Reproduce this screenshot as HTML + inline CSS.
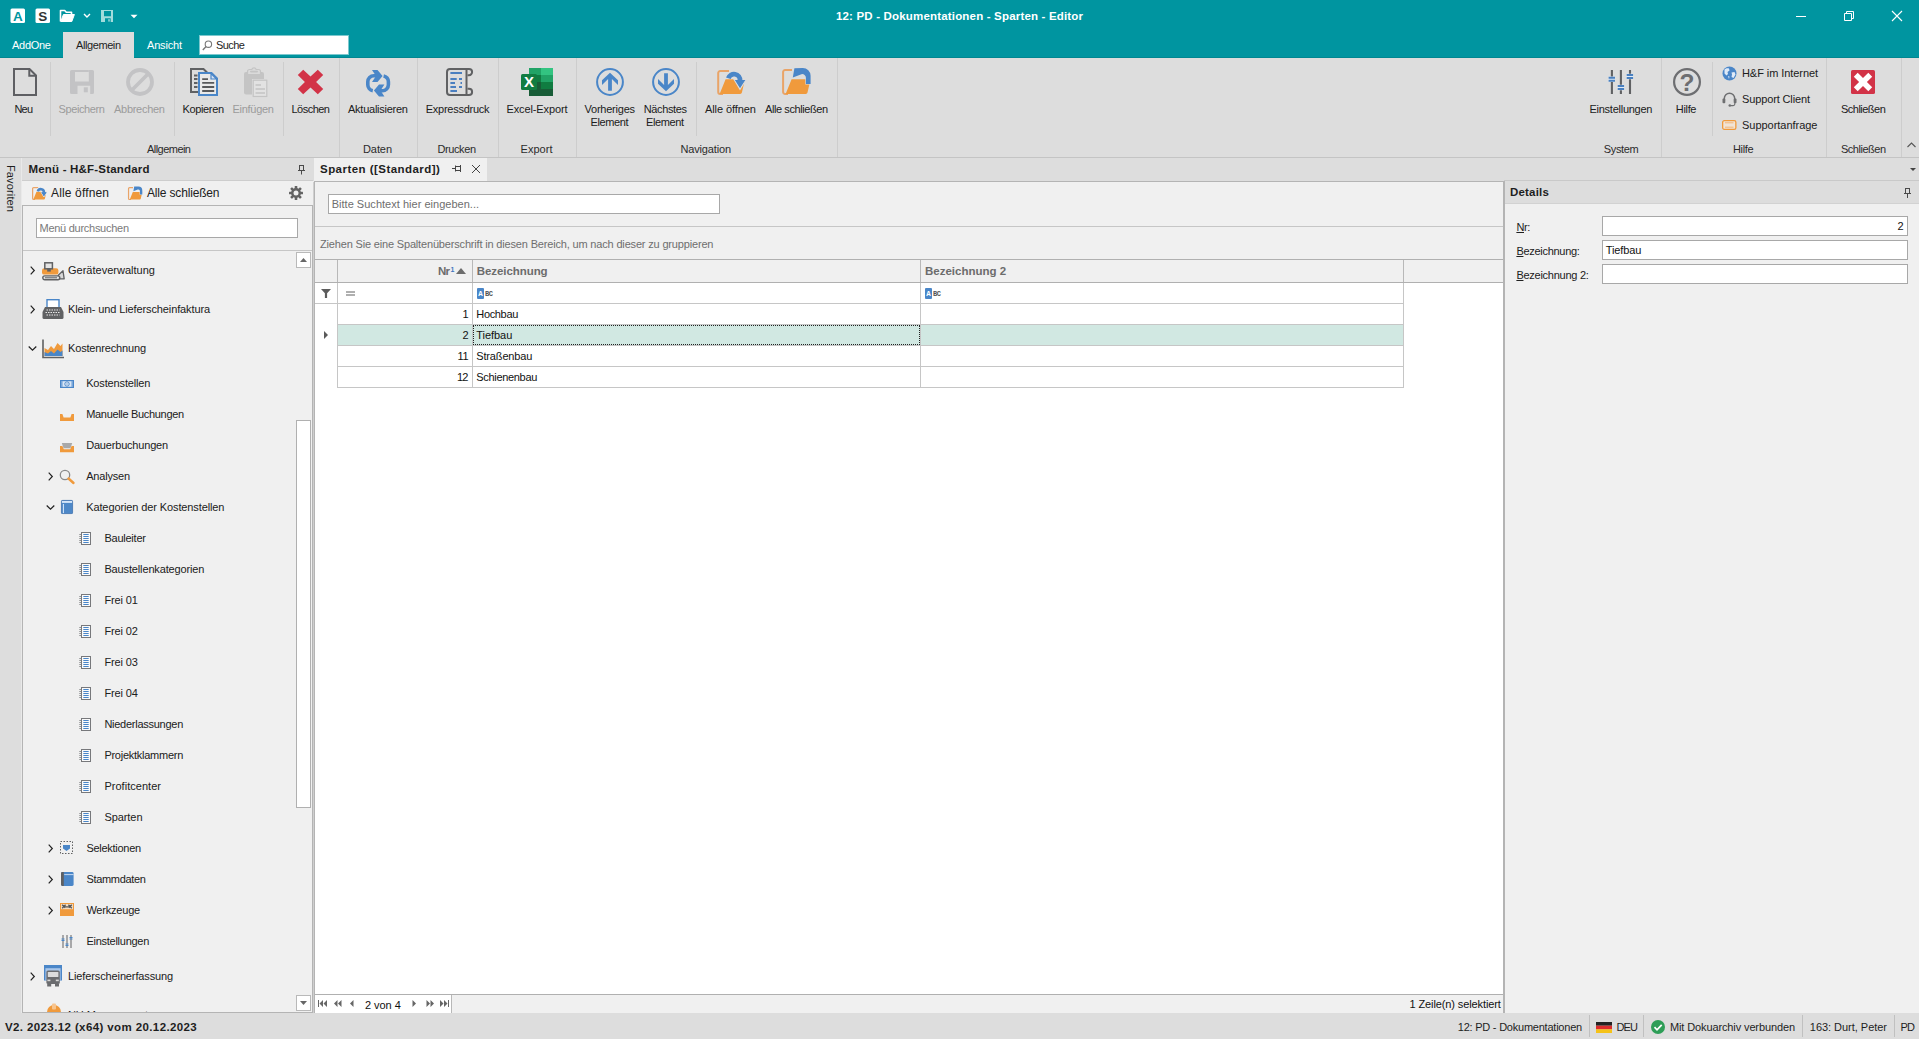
<!DOCTYPE html>
<html lang="de">
<head>
<meta charset="utf-8">
<title>12: PD - Dokumentationen - Sparten - Editor</title>
<style>
html,body{margin:0;padding:0;}
body{width:1919px;height:1039px;overflow:hidden;position:relative;background:#f0f0f0;
 font-family:"Liberation Sans","DejaVu Sans",sans-serif;font-size:11px;color:#202020;}
.a{position:absolute;white-space:nowrap;}
.t{position:absolute;white-space:nowrap;line-height:13px;height:13px;}
.dis{color:#9b9b9b;}
u{text-decoration:underline;text-underline-offset:1px;}
svg{position:absolute;overflow:visible;}
</style>
</head>
<body>
<div class="a" style="left:0px;top:0px;width:1919px;height:58px;background:#0095a0;"></div>
<div class="a" style="left:0px;top:58px;width:1919px;height:100px;background:#dddddd;"></div>
<div class="a" style="left:0px;top:57px;width:1919px;height:1px;background:#008791;"></div>
<div class="a" style="left:63px;top:32px;width:71px;height:26px;background:#dddddd;"></div>
<svg style="left:10px;top:8px" width="16" height="16" viewBox="0 0 16 16"><rect x="0.5" y="0.5" width="14.5" height="14.5" rx="1.5" fill="#fff"/><text x="7.8" y="12.6" font-family="Liberation Sans,sans-serif" font-weight="bold" font-size="13.5" text-anchor="middle" fill="#0095a0">A</text></svg>
<svg style="left:35px;top:8px" width="16" height="16" viewBox="0 0 16 16"><rect x="0.5" y="0.5" width="14.5" height="14.5" rx="1.5" fill="#fff"/><text x="7.8" y="12.6" font-family="Liberation Sans,sans-serif" font-weight="bold" font-size="13.5" text-anchor="middle" fill="#333">S</text></svg>
<svg style="left:59px;top:9px" width="17" height="14" viewBox="0 0 17 14"><path d="M1.5 12.5V1.5h4.2l1.6 1.8h5.2v2.2" fill="none" stroke="#fff" stroke-width="1.6" stroke-linejoin="round"/><path d="M1.8 12.5l2.6-7h11l-2.6 7z" fill="#fff" stroke="#fff" stroke-width="1" stroke-linejoin="round"/></svg>
<svg style="left:83px;top:13px" width="8" height="6" viewBox="0 0 8 6"><path d="M1 1l3 3 3-3" fill="none" stroke="#fff" stroke-width="1.4"/></svg>
<svg style="left:101px;top:10px" width="12" height="12" viewBox="0 0 12 12"><path d="M0 0h12v12H0z M3 1v5.200h7V1z M4 12V8.300h5.700V12z" fill="#a3dcdc" fill-rule="evenodd"/><rect x="7.300" y="9.200" width="1.400" height="2.400" fill="#a3dcdc"/></svg>
<svg style="left:130px;top:14px" width="8" height="5" viewBox="0 0 8 5"><path d="M0.5 0.8h7L4 4.3z" fill="#fff"/></svg>
<div class="t" style="left:835.9px;top:10px;font-weight:bold;font-size:11.5px;color:#fff;letter-spacing:0.18px;">12: PD - Dokumentationen - Sparten - Editor</div>
<svg style="left:1796px;top:16px" width="10" height="1"><rect width="10" height="1" fill="#fff"/></svg>
<svg style="left:1844px;top:11px" width="10" height="10" viewBox="0 0 10 10"><path d="M0.500 2.500h7v7h-7z M2.500 2.500v-2h7v7h-2" fill="none" stroke="#fff" stroke-width="1"/></svg>
<svg style="left:1892px;top:11px" width="10" height="10" viewBox="0 0 10 10"><path d="M0 0l10 10M10 0l-10 10" fill="none" stroke="#fff" stroke-width="1.100"/></svg>
<div class="t" style="left:12px;top:39px;color:#fff;letter-spacing:-0.28px;">AddOne</div>
<div class="t" style="left:76px;top:39px;color:#1e1e1e;letter-spacing:-0.41px;">Allgemein</div>
<div class="t" style="left:147px;top:39px;color:#fff;letter-spacing:-0.18px;">Ansicht</div>
<div class="a" style="left:199px;top:35px;width:150px;height:20px;background:#fff;border:1px solid #7cc8ce;box-sizing:border-box;"></div>
<svg style="left:202px;top:40px" width="11" height="11" viewBox="0 0 11 11"><circle cx="6.4" cy="4.2" r="3.2" fill="none" stroke="#777" stroke-width="1.1"/><path d="M4.1 6.6L0.8 9.9" stroke="#777" stroke-width="1.4"/></svg>
<div class="t" style="left:216px;top:39px;color:#1e1e1e;letter-spacing:-0.55px;">Suche</div>
<div class="a" style="left:50px;top:62px;width:1px;height:74px;background:#cdcdcd;"></div>
<div class="a" style="left:174px;top:62px;width:1px;height:74px;background:#cdcdcd;"></div>
<div class="a" style="left:283px;top:62px;width:1px;height:74px;background:#cdcdcd;"></div>
<div class="a" style="left:696px;top:62px;width:1px;height:74px;background:#cdcdcd;"></div>
<div class="a" style="left:1712px;top:62px;width:1px;height:74px;background:#cdcdcd;"></div>
<div class="a" style="left:339px;top:58px;width:1px;height:99px;background:#cdcdcd;"></div>
<div class="a" style="left:417px;top:58px;width:1px;height:99px;background:#cdcdcd;"></div>
<div class="a" style="left:498px;top:58px;width:1px;height:99px;background:#cdcdcd;"></div>
<div class="a" style="left:576px;top:58px;width:1px;height:99px;background:#cdcdcd;"></div>
<div class="a" style="left:837px;top:58px;width:1px;height:99px;background:#cdcdcd;"></div>
<div class="a" style="left:1661px;top:58px;width:1px;height:99px;background:#cdcdcd;"></div>
<div class="a" style="left:1826px;top:58px;width:1px;height:99px;background:#cdcdcd;"></div>
<div class="a" style="left:1901px;top:58px;width:1px;height:99px;background:#cdcdcd;"></div>
<div class="a" style="left:0px;top:157px;width:1919px;height:1px;background:#c4c4c4;"></div>
<svg style="left:13px;top:68px" width="24" height="28" viewBox="0 0 24 28"><path d="M1 1h15.500l6.500 6.500V27H1z" fill="none" stroke="#5e5f63" stroke-width="2" stroke-linejoin="miter"/><path d="M16.300 1.500v6.200H22.500" fill="none" stroke="#5e5f63" stroke-width="2"/></svg>
<div class="t" style="left:14.5px;top:103px;letter-spacing:-0.84px;">Neu</div>
<svg style="left:70px;top:70px" width="24" height="24" viewBox="0 0 24 24"><path d="M1.500 0h21a1.500 1.500 0 0 1 1.500 1.500v21a1.500 1.500 0 0 1 -1.500 1.500h-21a1.500 1.500 0 0 1 -1.500 -1.500v-21a1.500 1.500 0 0 1 1.500 -1.500z M5 0v11.500h13.800v-11.500z M7.500 15.700v8.300h12.700v-8.300z" fill="#c3c3c5" fill-rule="evenodd"/><rect x="5" y="0" width="13.800" height="2" fill="#c3c3c5"/><rect x="13.800" y="17.300" width="4" height="5" fill="#c3c3c5"/></svg>
<div class="t dis" style="left:58.5px;top:103px;letter-spacing:-0.38px;">Speichern</div>
<svg style="left:126px;top:68px" width="28" height="28" viewBox="0 0 28 28"><circle cx="14" cy="14" r="12" fill="none" stroke="#c3c3c5" stroke-width="3.800"/><path d="M5.500 22.500L22.500 5.500" stroke="#c3c3c5" stroke-width="3.800"/></svg>
<div class="t dis" style="left:114px;top:103px;letter-spacing:-0.28px;">Abbrechen</div>
<svg style="left:190px;top:68px" width="28" height="28" viewBox="0 0 28 28"><path d="M1 1h12.500l3.500 3.500v19.500H1z" fill="none" stroke="#606163" stroke-width="2"/><path d="M4 7.500h3.500M4 11h3.500M4 15h3.500M4 19h3.500" stroke="#606163" stroke-width="1.800"/><path d="M9 5h12.500l5.500 5.500V27H9z" fill="#e9e9e9" stroke="#4a86c8" stroke-width="2"/><path d="M21 5.500v5.500h5.500z" fill="#d5e2f4" stroke="#4a86c8" stroke-width="1.200"/><path d="M12.200 11.100h5.800M12.200 14.900h12M12.200 19h12M12.200 23h12" stroke="#58595b" stroke-width="1.900"/></svg>
<div class="t" style="left:182.5px;top:103px;letter-spacing:-0.36px;">Kopieren</div>
<svg style="left:244px;top:66px" width="24" height="31" viewBox="0 0 24 31"><rect x="0" y="6" width="20" height="22.500" rx="2" fill="#c4c4c4"/><path d="M3.500 8.500V5.500a2 2 0 0 1 2 -2h2.300a2.300 2.300 0 0 1 4.400 0h2.300a2 2 0 0 1 2 2V8.500z" fill="#dadada" stroke="#c4c4c4" stroke-width="1.200"/><rect x="6" y="4.800" width="8" height="1.600" rx="0.800" fill="#c4c4c4"/><rect x="9.200" y="14.200" width="13.600" height="16.300" fill="#e2e2e2" stroke="#dedede" stroke-width="2.400"/><rect x="9.200" y="14.200" width="13.600" height="16.300" fill="#e2e2e2" stroke="#c4c4c4" stroke-width="1.200"/><path d="M11.500 19h5.500M11.500 23h9.500M11.500 27h9.500" stroke="#c4c4c4" stroke-width="1.700"/></svg>
<div class="t dis" style="left:232.5px;top:103px;letter-spacing:-0.28px;">Einfügen</div>
<svg style="left:298px;top:70px" width="25" height="24" viewBox="0 0 25 24"><path d="M5.200 -0.300L12.500 6.600L19.800 -0.300L25.200 5.100L18.100 12L25.200 18.900L19.800 24.300L12.500 17.400L5.200 24.300L-0.200 18.900L6.900 12L-0.200 5.100z" fill="#d23347"/></svg>
<div class="t" style="left:291.5px;top:103px;letter-spacing:-0.52px;">Löschen</div>
<svg style="left:366px;top:70px" width="24" height="26" viewBox="0 0 24 26"><path d="M10 5.800H7.800A6 6 0 0 0 1.800 11.800V14.800A6 6 0 0 0 6.800 20.700" fill="none" stroke="#4a86c8" stroke-width="3.600"/><path d="M14 20.800H16.400A6 6 0 0 0 22.400 14.800V11.800A6 6 0 0 0 17.600 5.900" fill="none" stroke="#4a86c8" stroke-width="3.600"/><path d="M6 0H11.500L16.600 6L11.500 12H6L10 6z" fill="#4a86c8"/><path d="M18.400 14.600H13L7.900 20.600L13 26.400H18.400L14.500 20.600z" fill="#4a86c8"/></svg>
<div class="t" style="left:348px;top:103px;letter-spacing:-0.25px;">Aktualisieren</div>
<svg style="left:446px;top:68px" width="27" height="28" viewBox="0 0 27 28"><path d="M21.500 7.200H23A3 3 0 1 0 23 1H4A3 3 0 0 0 1 4V24A3 3 0 0 0 4 27H23A3 3 0 1 0 23 20.800H21.500" fill="none" stroke="#606163" stroke-width="2"/><path d="M20.500 1.500V26.500" stroke="#606163" stroke-width="2"/><path d="M4.400 5h11.600M4.400 11h6.300M13 11h3M4.400 15h4.600M14.500 15h1.500M4.400 19h5.600M13 19h3M4.400 23h6.600" stroke="#4a7fc0" stroke-width="1.800"/></svg>
<div class="t" style="left:425.8px;top:103px;letter-spacing:-0.27px;">Expressdruck</div>
<svg style="left:521px;top:68px" width="32" height="28" viewBox="0 0 32 28"><rect x="8" y="0" width="24" height="28" rx="1.500" fill="#21a366"/><rect x="20" y="0" width="12" height="7" fill="#33c481"/><rect x="8" y="0" width="12" height="7" fill="#21a366"/><rect x="8" y="7" width="12" height="7" fill="#107c41"/><rect x="20" y="7" width="12" height="7" fill="#21a366"/><rect x="8" y="14" width="12" height="7" fill="#185c37"/><rect x="20" y="14" width="12" height="7" fill="#107c41"/><rect x="8" y="21" width="24" height="7" fill="#185c37"/><rect x="0" y="6" width="16" height="16" rx="1.500" fill="#107c41"/><text x="8" y="19.400" font-family="Liberation Sans,sans-serif" font-weight="bold" font-size="15" text-anchor="middle" fill="#fff">X</text></svg>
<div class="t" style="left:506.5px;top:103px;letter-spacing:-0.12px;">Excel-Export</div>
<svg style="left:596px;top:68px" width="28" height="28" viewBox="0 0 28 28"><circle cx="14" cy="14" r="12.900" fill="none" stroke="#4a86c8" stroke-width="2"/><path d="M14 4.700L22 12.200V16.900L15.900 11.100V22.800H12.100V11.100L6 16.900V12.200z" fill="#4a86c8"/></svg>
<div class="t" style="left:584.5px;top:103px;letter-spacing:-0.23px;">Vorheriges</div>
<div class="t" style="left:590.5px;top:116px;letter-spacing:-0.39px;">Element</div>
<svg style="left:652px;top:68px" width="28" height="28" viewBox="0 0 28 28"><circle cx="14" cy="14" r="12.900" fill="none" stroke="#4a86c8" stroke-width="2"/><path d="M14 23.300L22 15.800V11.100L15.900 16.900V5.200H12.100V16.900L6 11.100V15.800z" fill="#4a86c8"/></svg>
<div class="t" style="left:643.8px;top:103px;letter-spacing:-0.38px;">Nächstes</div>
<div class="t" style="left:646px;top:116px;letter-spacing:-0.39px;">Element</div>
<svg style="left:717px;top:68px" width="29" height="28" viewBox="0 0 29 28"><path d="M12 3H3.200A2 2 0 0 0 1.200 5V24A2 2 0 0 0 3.200 26H6" fill="none" stroke="#e9a468" stroke-width="2"/><path d="M8.600 11.200H28L24.900 24.600A1.800 1.800 0 0 1 23.100 26H2.600z" fill="#f09a3c"/><path d="M11.300 10.300A6 6 0 0 1 23 12.500" fill="none" stroke="#dddddd" stroke-width="6.600"/><path d="M17.200 11.400h11.800l-6 9.800z" fill="#4a86c8" stroke="#dddddd" stroke-width="1.400"/><path d="M11.300 10.300A6 6 0 0 1 23 12.500" fill="none" stroke="#4a86c8" stroke-width="4.800"/><path d="M17.900 12.100h10.400l-5.300 7.900z" fill="#4a86c8"/></svg>
<div class="t" style="left:705px;top:103px;letter-spacing:-0.08px;">Alle öffnen</div>
<svg style="left:782px;top:67px" width="30" height="29" viewBox="0 0 30 29"><path d="M10 3.100H3.100A2 2 0 0 0 1.100 5.100V25A2 2 0 0 0 3.100 27H6" fill="none" stroke="#e9a468" stroke-width="2"/><path d="M9.600 12.200H28.600L25.500 25.600A1.800 1.800 0 0 1 23.700 27H3.600z" fill="#f09a3c"/><path d="M28.600 17V8.800A7.800 7.800 0 0 0 20.800 1L12.400 1.200L10.800 10.600L19.500 7.200A3.600 3.600 0 0 1 23.900 10.800V17z" fill="#4a86c8" stroke="#dddddd" stroke-width="1.200" paint-order="stroke"/></svg>
<div class="t" style="left:765px;top:103px;letter-spacing:-0.42px;">Alle schließen</div>
<svg style="left:1609px;top:70px" width="25" height="24" viewBox="0 0 25 24"><path d="M2.900 0v24M11.900 0v24M21 0v24" stroke="#606163" stroke-width="2.100"/><rect x="-0.600" y="6.500" width="6.800" height="5.500" rx="1" fill="#dfeaf6"/><rect x="8.500" y="14.700" width="6.800" height="5.500" rx="1" fill="#dfeaf6"/><rect x="17.500" y="3.700" width="6.800" height="5.500" rx="1" fill="#dfeaf6"/><path d="M-0.400 7.800h6.400M-0.400 10.700h6.400M8.700 16h6.400M8.700 18.900h6.400M17.700 5h6.400M17.700 7.900h6.400" stroke="#4a80c0" stroke-width="2"/></svg>
<div class="t" style="left:1589.5px;top:103px;letter-spacing:-0.26px;">Einstellungen</div>
<svg style="left:1673px;top:68px" width="28" height="28" viewBox="0 0 28 28"><circle cx="14" cy="14" r="12.900" fill="none" stroke="#6d6e71" stroke-width="2.200"/><text x="14" y="23" font-family="Liberation Sans,sans-serif" font-weight="bold" font-size="24.500" text-anchor="middle" fill="#6d6e71">?</text></svg>
<div class="t" style="left:1675.8px;top:103px;letter-spacing:-0.33px;">Hilfe</div>
<svg style="left:1722px;top:66px" width="15" height="15" viewBox="0 0 15 15"><circle cx="7.500" cy="7.500" r="7" fill="#4a86c8"/><path d="M2.500 3.500c1.500-1.500 3.500-1.500 4.500-1l0.500 2-2 1.500 0.500 2-1.500 1.500-2-2z M9.500 6.500l3-0.500 1 2.500-2 3.500-2-1 0.500-2.500z M6 10l1.500 0.500-0.500 2.500z" fill="#dfeaf8"/></svg>
<div class="t" style="left:1742px;top:67px;letter-spacing:-0.07px;">H&amp;F im Internet</div>
<svg style="left:1722px;top:92px" width="15" height="15" viewBox="0 0 15 15"><path d="M2.300 9V6.500a5.200 5.200 0 0 1 10.400 0V9" fill="none" stroke="#6e6f71" stroke-width="1.500"/><rect x="0.500" y="6.500" width="2.800" height="4.800" rx="1" fill="#6e6f71"/><rect x="11.700" y="6.500" width="2.800" height="4.800" rx="1" fill="#6e6f71"/><path d="M12.800 11v0.800a1.800 1.800 0 0 1 -1.800 1.800H8.500" fill="none" stroke="#6e6f71" stroke-width="1.100"/><circle cx="7.800" cy="13.500" r="1.300" fill="#6e6f71"/></svg>
<div class="t" style="left:1742px;top:93px;letter-spacing:-0.13px;">Support Client</div>
<svg style="left:1722px;top:120px" width="15" height="11" viewBox="0 0 15 11"><rect x="0.650" y="0.650" width="13.200" height="8.700" rx="1.600" fill="#f1e4d6" stroke="#f09a3c" stroke-width="1.300"/><path d="M3 2.800h8.500M3 7.200h8.500" stroke="#f2b478" stroke-width="1"/></svg>
<div class="t" style="left:1742px;top:119px;letter-spacing:-0.03px;">Supportanfrage</div>
<svg style="left:1851px;top:70px" width="24" height="24" viewBox="0 0 24 24"><rect x="0" y="0" width="24" height="24" rx="1.600" fill="#d23347"/><path d="M6.700 2.800L12 8.100L17.300 2.800L21.200 6.700L15.900 12L21.200 17.300L17.300 21.200L12 15.900L6.700 21.200L2.800 17.300L8.100 12L2.800 6.700z" fill="#fff"/></svg>
<div class="t" style="left:1841px;top:103px;letter-spacing:-0.52px;">Schließen</div>
<svg style="left:1907px;top:142px" width="9" height="6" viewBox="0 0 9 6"><path d="M0.500 5l4-4 4 4" fill="none" stroke="#555" stroke-width="1.100"/></svg>
<div class="t" style="left:147px;top:143px;color:#2b2b2b;letter-spacing:-0.54px;">Allgemein</div>
<div class="t" style="left:363px;top:143px;color:#2b2b2b;letter-spacing:-0.09px;">Daten</div>
<div class="t" style="left:437.5px;top:143px;color:#2b2b2b;letter-spacing:-0.41px;">Drucken</div>
<div class="t" style="left:520.5px;top:143px;color:#2b2b2b;letter-spacing:0.04px;">Export</div>
<div class="t" style="left:680.5px;top:143px;color:#2b2b2b;letter-spacing:-0.16px;">Navigation</div>
<div class="t" style="left:1603.8px;top:143px;color:#2b2b2b;letter-spacing:-0.34px;">System</div>
<div class="t" style="left:1733px;top:143px;color:#2b2b2b;letter-spacing:-0.33px;">Hilfe</div>
<div class="t" style="left:1841px;top:143px;color:#2b2b2b;letter-spacing:-0.49px;">Schließen</div>
<div class="a" style="left:0px;top:158px;width:21px;height:856px;background:#dddddd;"></div>
<div class="a" style="left:21px;top:158px;width:1px;height:856px;background:#e9e9e9;"></div>
<div class="t" style="left:4px;top:165px;transform-origin:0 0;transform:translate(13px,0) rotate(90deg);letter-spacing:0.140px;color:#1e1e1e">Favoriten</div>
<div class="a" style="left:22px;top:158px;width:291px;height:23px;background:#dddddd;"></div>
<div class="a" style="left:22px;top:180px;width:291px;height:1px;background:#cdcdcd;"></div>
<div class="t" style="left:28.5px;top:163px;font-weight:bold;font-size:11.5px;color:#1e1e1e;letter-spacing:0.19px;">Menü - H&amp;F-Standard</div>
<svg style="left:298px;top:165px" width="7" height="10" viewBox="0 0 7 10"><path d="M1 0.500h5M1.500 0v5M5.500 0v5M0 5.500h7M3.500 6v3.500" fill="none" stroke="#4a4a4a" stroke-width="1"/></svg>
<div class="a" style="left:22px;top:181px;width:291px;height:25px;background:#f0f0f0;"></div>
<svg style="left:32px;top:186px" width="15" height="14.500" viewBox="0 0 29 28"><path d="M12 3H3.200A2 2 0 0 0 1.200 5V24A2 2 0 0 0 3.200 26H6" fill="none" stroke="#e9a468" stroke-width="2.400"/><path d="M8.600 11.200H28L24.900 24.600A1.800 1.800 0 0 1 23.100 26H2.600z" fill="#f09a3c"/><path d="M11.300 10.300A6 6 0 0 1 23 12.500" fill="none" stroke="#f0f0f0" stroke-width="7"/><path d="M17.200 11.400h11.800l-6 9.800z" fill="#4a86c8" stroke="#f0f0f0" stroke-width="1.600"/><path d="M11.300 10.300A6 6 0 0 1 23 12.500" fill="none" stroke="#4a86c8" stroke-width="5"/><path d="M17.900 12.100h10.400l-5.300 7.900z" fill="#4a86c8"/></svg>
<div class="t" style="left:51px;top:186px;font-size:12px;line-height:14px;height:14px;letter-spacing:0.15px;">Alle öffnen</div>
<svg style="left:128px;top:185.500px" width="15" height="14.500" viewBox="0 0 30 29"><path d="M10 3.100H3.100A2 2 0 0 0 1.100 5.100V25A2 2 0 0 0 3.100 27H6" fill="none" stroke="#e9a468" stroke-width="2.400"/><path d="M9.600 12.200H28.600L25.500 25.600A1.800 1.800 0 0 1 23.700 27H3.600z" fill="#f09a3c"/><path d="M28.600 17V8.800A7.800 7.800 0 0 0 20.800 1L12.400 1.200L10.800 10.600L19.500 7.200A3.600 3.600 0 0 1 23.900 10.800V17z" fill="#4a86c8" stroke="#f0f0f0" stroke-width="1.400" paint-order="stroke"/></svg>
<div class="t" style="left:147px;top:186px;font-size:12px;line-height:14px;height:14px;letter-spacing:-0.17px;">Alle schließen</div>
<svg style="left:289px;top:186px" width="14" height="14" viewBox="0 0 14 14"><g fill="#636363"><circle cx="7" cy="7" r="4.900"/><rect x="5.700" y="0" width="2.600" height="14" rx="0.500"/><rect x="5.700" y="0" width="2.600" height="14" rx="0.500" transform="rotate(45 7 7)"/><rect x="5.700" y="0" width="2.600" height="14" rx="0.500" transform="rotate(90 7 7)"/><rect x="5.700" y="0" width="2.600" height="14" rx="0.500" transform="rotate(135 7 7)"/></g><circle cx="7" cy="7" r="2.500" fill="#f0f0f0"/></svg>
<div class="a" style="left:22px;top:205px;width:291px;height:808px;background:#f0f0f0;border:1px solid #b4b4b4;box-sizing:border-box;"></div>
<div class="a" style="left:36px;top:218px;width:262px;height:20px;background:#fff;border:1px solid #a8a8a8;box-sizing:border-box;"></div>
<div class="t" style="left:39.5px;top:222px;color:#7a7a7a;letter-spacing:-0.27px;">Menü durchsuchen</div>
<div class="a" style="left:23px;top:250px;width:289px;height:1px;background:#c6c6c6;"></div>
<div class="a" style="left:296px;top:252px;width:15px;height:16px;background:#fff;border:1px solid #b9b9b9;box-sizing:border-box;"></div>
<svg style="left:300px;top:258px" width="7" height="4" viewBox="0 0 7 4"><path d="M0 4L3.500 0L7 4z" fill="#666"/></svg>
<div class="a" style="left:296px;top:420px;width:15px;height:388px;background:#fff;border:1px solid #b0b0b0;box-sizing:border-box;"></div>
<div class="a" style="left:296px;top:995px;width:15px;height:16px;background:#fff;border:1px solid #b9b9b9;box-sizing:border-box;"></div>
<svg style="left:300px;top:1001px" width="7" height="4" viewBox="0 0 7 4"><path d="M0 0L3.500 4L7 0z" fill="#666"/></svg>
<svg style="left:30px;top:266px" width="5" height="9" viewBox="0 0 5 9"><path d="M0.700 0.700l3.600 3.800-3.600 3.800" fill="none" stroke="#222" stroke-width="1.200"/></svg>
<svg style="left:42px;top:261px" width="23" height="19" viewBox="0 0 23 19"><rect x="0" y="7.200" width="16.400" height="6.400" rx="2.200" fill="#f09a3c"/><rect x="2.800" y="1.800" width="7.600" height="6" fill="#e4e4e4" stroke="#606163" stroke-width="1.500"/><rect x="5.200" y="7.200" width="3.600" height="3.400" fill="#606163"/><path d="M16.500 14L21 9.800L22.200 17.900H15.500z" fill="#d8d8d8" stroke="#606163" stroke-width="1.300" stroke-linejoin="round"/><rect x="0.800" y="14.900" width="17" height="3.800" rx="1.900" fill="#e4e4e4" stroke="#606163" stroke-width="1.400"/><path d="M3 16.800h12" stroke="#606163" stroke-width="1"/></svg>
<div class="t" style="left:68px;top:264px;letter-spacing:0.01px;">Geräteverwaltung</div>
<svg style="left:30px;top:305px" width="5" height="9" viewBox="0 0 5 9"><path d="M0.700 0.700l3.600 3.800-3.600 3.800" fill="none" stroke="#222" stroke-width="1.200"/></svg>
<svg style="left:42px;top:299px" width="22" height="20" viewBox="0 0 22 20"><rect x="5" y="0.700" width="12" height="9" fill="#fff" stroke="#4a86c8" stroke-width="1.400"/><path d="M3 8h16l2.500 5v5.500a1.500 1.500 0 0 1 -1.500 1.500H2a1.500 1.500 0 0 1 -1.500 -1.500V13z" fill="#606163"/><path d="M4.500 11h13M3.500 13.500h15M4.500 16h13" stroke="#e8e8e8" stroke-width="1.200" stroke-dasharray="1.500 1"/></svg>
<div class="t" style="left:68px;top:303px;letter-spacing:-0.12px;">Klein- und Lieferscheinfaktura</div>
<svg style="left:28px;top:346px" width="9" height="5" viewBox="0 0 9 5"><path d="M0.700 0.500l3.800 3.700 3.800-3.700" fill="none" stroke="#222" stroke-width="1.200"/></svg>
<svg style="left:42px;top:339px" width="22" height="20" viewBox="0 0 22 20"><path d="M2.500 17V9l3.500 2 3-4 3 3 3.500-6 3 3 2-2.500V17z" fill="#f09a3c"/><path d="M2.500 17v-4l3.500 1.500 3-2.500 3 2.500 3.500-4 3 2.500 2-1.500V17z" fill="#4a86c8"/><path d="M1 0.500V18.500H22" fill="none" stroke="#606163" stroke-width="1.600"/></svg>
<div class="t" style="left:68px;top:342px;letter-spacing:-0.16px;">Kostenrechnung</div>
<svg style="left:60px;top:380px" width="14" height="8" viewBox="0 0 14 8"><rect x="0.600" y="0.600" width="12.800" height="6.800" fill="#dbe7f6" stroke="#4a86c8" stroke-width="1.200"/><rect x="1" y="1" width="1.600" height="6" fill="#7aa7da"/><rect x="11.400" y="1" width="1.600" height="6" fill="#7aa7da"/><circle cx="7" cy="4" r="2.200" fill="#f4f8fd" stroke="#4a86c8" stroke-width="1"/><circle cx="7" cy="4" r="0.700" fill="#4a86c8"/></svg>
<div class="t" style="left:86.2px;top:377px;letter-spacing:-0.15px;">Kostenstellen</div>
<svg style="left:60px;top:414px" width="14" height="7" viewBox="0 0 14 7"><path d="M0 0h2.400l1.200 3.400h6.800l1.200-3.400H14v7H0z" fill="#f09a3c"/></svg>
<div class="t" style="left:86.2px;top:408px;letter-spacing:-0.32px;">Manuelle Buchungen</div>
<svg style="left:60px;top:442.5px" width="14" height="9.5" viewBox="0 0 14 9.5"><path d="M1.800 0h10.400l-1.700 5.200h-7z" fill="#a9a9a9"/><path d="M0 3h2.400l1.400 3.300h6.400l1.400-3.300H14v6.300H0z" fill="#f09a3c"/></svg>
<div class="t" style="left:86.2px;top:439px;letter-spacing:-0.19px;">Dauerbuchungen</div>
<svg style="left:48px;top:472px" width="5" height="9" viewBox="0 0 5 9"><path d="M0.700 0.700l3.600 3.800-3.600 3.800" fill="none" stroke="#222" stroke-width="1.200"/></svg>
<svg style="left:59px;top:469px" width="16" height="15" viewBox="0 0 16 15"><circle cx="6" cy="6" r="4.700" fill="none" stroke="#8a8a8a" stroke-width="1.300"/><path d="M9.500 9.500l5 4.500" stroke="#f09a3c" stroke-width="2.400" stroke-linecap="round"/></svg>
<div class="t" style="left:86.2px;top:470px;letter-spacing:-0.18px;">Analysen</div>
<svg style="left:46px;top:505px" width="9" height="5" viewBox="0 0 9 5"><path d="M0.700 0.500l3.800 3.700 3.800-3.700" fill="none" stroke="#222" stroke-width="1.200"/></svg>
<svg style="left:61px;top:500px" width="12" height="14" viewBox="0 0 12 14"><rect x="0" y="0" width="12" height="14" rx="1.600" fill="#4d88c8"/><rect x="0.400" y="0.400" width="11.200" height="13.200" rx="1.300" fill="none" stroke="#5a82b2" stroke-width="0.800"/><rect x="0.900" y="1.100" width="10.200" height="1.700" fill="#e4f1ff"/><path d="M2.400 4v9.100" stroke="#dcecff" stroke-width="1"/></svg>
<div class="t" style="left:86.2px;top:501px;letter-spacing:-0.11px;">Kategorien der Kostenstellen</div>
<svg style="left:79px;top:532px" width="12" height="13" viewBox="0 0 12 13"><rect x="2.500" y="0.500" width="9" height="12" fill="#fafafa" stroke="#77787b" stroke-width="1"/><path d="M4.300 2.500h5.400M4.300 4.500h5.400M4.300 6.500h5.400M4.300 8.500h5.400M4.300 10.500h5.400" stroke="#4a86c8" stroke-width="1"/><path d="M0.300 2.500h2.700M0.300 4.500h2.700M0.300 6.500h2.700M0.300 8.500h2.700M0.300 10.500h2.700" stroke="#77787b" stroke-width="0.800"/></svg>
<div class="t" style="left:104.4px;top:532px;letter-spacing:-0.23px;">Bauleiter</div>
<svg style="left:79px;top:563px" width="12" height="13" viewBox="0 0 12 13"><rect x="2.500" y="0.500" width="9" height="12" fill="#fafafa" stroke="#77787b" stroke-width="1"/><path d="M4.300 2.500h5.400M4.300 4.500h5.400M4.300 6.500h5.400M4.300 8.500h5.400M4.300 10.500h5.400" stroke="#4a86c8" stroke-width="1"/><path d="M0.300 2.500h2.700M0.300 4.500h2.700M0.300 6.500h2.700M0.300 8.500h2.700M0.300 10.500h2.700" stroke="#77787b" stroke-width="0.800"/></svg>
<div class="t" style="left:104.4px;top:563px;letter-spacing:-0.14px;">Baustellenkategorien</div>
<svg style="left:79px;top:594px" width="12" height="13" viewBox="0 0 12 13"><rect x="2.500" y="0.500" width="9" height="12" fill="#fafafa" stroke="#77787b" stroke-width="1"/><path d="M4.300 2.500h5.400M4.300 4.500h5.400M4.300 6.500h5.400M4.300 8.500h5.400M4.300 10.500h5.400" stroke="#4a86c8" stroke-width="1"/><path d="M0.300 2.500h2.700M0.300 4.500h2.700M0.300 6.500h2.700M0.300 8.500h2.700M0.300 10.500h2.700" stroke="#77787b" stroke-width="0.800"/></svg>
<div class="t" style="left:104.4px;top:594px;letter-spacing:-0.14px;">Frei 01</div>
<svg style="left:79px;top:625px" width="12" height="13" viewBox="0 0 12 13"><rect x="2.500" y="0.500" width="9" height="12" fill="#fafafa" stroke="#77787b" stroke-width="1"/><path d="M4.300 2.500h5.400M4.300 4.500h5.400M4.300 6.500h5.400M4.300 8.500h5.400M4.300 10.500h5.400" stroke="#4a86c8" stroke-width="1"/><path d="M0.300 2.500h2.700M0.300 4.500h2.700M0.300 6.500h2.700M0.300 8.500h2.700M0.300 10.500h2.700" stroke="#77787b" stroke-width="0.800"/></svg>
<div class="t" style="left:104.4px;top:625px;letter-spacing:-0.14px;">Frei 02</div>
<svg style="left:79px;top:656px" width="12" height="13" viewBox="0 0 12 13"><rect x="2.500" y="0.500" width="9" height="12" fill="#fafafa" stroke="#77787b" stroke-width="1"/><path d="M4.300 2.500h5.400M4.300 4.500h5.400M4.300 6.500h5.400M4.300 8.500h5.400M4.300 10.500h5.400" stroke="#4a86c8" stroke-width="1"/><path d="M0.300 2.500h2.700M0.300 4.500h2.700M0.300 6.500h2.700M0.300 8.500h2.700M0.300 10.500h2.700" stroke="#77787b" stroke-width="0.800"/></svg>
<div class="t" style="left:104.4px;top:656px;letter-spacing:-0.14px;">Frei 03</div>
<svg style="left:79px;top:687px" width="12" height="13" viewBox="0 0 12 13"><rect x="2.500" y="0.500" width="9" height="12" fill="#fafafa" stroke="#77787b" stroke-width="1"/><path d="M4.300 2.500h5.400M4.300 4.500h5.400M4.300 6.500h5.400M4.300 8.500h5.400M4.300 10.500h5.400" stroke="#4a86c8" stroke-width="1"/><path d="M0.300 2.500h2.700M0.300 4.500h2.700M0.300 6.500h2.700M0.300 8.500h2.700M0.300 10.500h2.700" stroke="#77787b" stroke-width="0.800"/></svg>
<div class="t" style="left:104.4px;top:687px;letter-spacing:-0.14px;">Frei 04</div>
<svg style="left:79px;top:718px" width="12" height="13" viewBox="0 0 12 13"><rect x="2.500" y="0.500" width="9" height="12" fill="#fafafa" stroke="#77787b" stroke-width="1"/><path d="M4.300 2.500h5.400M4.300 4.500h5.400M4.300 6.500h5.400M4.300 8.500h5.400M4.300 10.500h5.400" stroke="#4a86c8" stroke-width="1"/><path d="M0.300 2.500h2.700M0.300 4.500h2.700M0.300 6.500h2.700M0.300 8.500h2.700M0.300 10.500h2.700" stroke="#77787b" stroke-width="0.800"/></svg>
<div class="t" style="left:104.4px;top:718px;letter-spacing:-0.26px;">Niederlassungen</div>
<svg style="left:79px;top:749px" width="12" height="13" viewBox="0 0 12 13"><rect x="2.500" y="0.500" width="9" height="12" fill="#fafafa" stroke="#77787b" stroke-width="1"/><path d="M4.300 2.500h5.400M4.300 4.500h5.400M4.300 6.500h5.400M4.300 8.500h5.400M4.300 10.500h5.400" stroke="#4a86c8" stroke-width="1"/><path d="M0.300 2.500h2.700M0.300 4.500h2.700M0.300 6.500h2.700M0.300 8.500h2.700M0.300 10.500h2.700" stroke="#77787b" stroke-width="0.800"/></svg>
<div class="t" style="left:104.4px;top:749px;letter-spacing:-0.26px;">Projektklammern</div>
<svg style="left:79px;top:780px" width="12" height="13" viewBox="0 0 12 13"><rect x="2.500" y="0.500" width="9" height="12" fill="#fafafa" stroke="#77787b" stroke-width="1"/><path d="M4.300 2.500h5.400M4.300 4.500h5.400M4.300 6.500h5.400M4.300 8.500h5.400M4.300 10.500h5.400" stroke="#4a86c8" stroke-width="1"/><path d="M0.300 2.500h2.700M0.300 4.500h2.700M0.300 6.500h2.700M0.300 8.500h2.700M0.300 10.500h2.700" stroke="#77787b" stroke-width="0.800"/></svg>
<div class="t" style="left:104.4px;top:780px;letter-spacing:0.03px;">Profitcenter</div>
<svg style="left:79px;top:811px" width="12" height="13" viewBox="0 0 12 13"><rect x="2.500" y="0.500" width="9" height="12" fill="#fafafa" stroke="#77787b" stroke-width="1"/><path d="M4.300 2.500h5.400M4.300 4.500h5.400M4.300 6.500h5.400M4.300 8.500h5.400M4.300 10.500h5.400" stroke="#4a86c8" stroke-width="1"/><path d="M0.300 2.500h2.700M0.300 4.500h2.700M0.300 6.500h2.700M0.300 8.500h2.700M0.300 10.500h2.700" stroke="#77787b" stroke-width="0.800"/></svg>
<div class="t" style="left:104.4px;top:811px;letter-spacing:-0.07px;">Sparten</div>
<svg style="left:48px;top:844px" width="5" height="9" viewBox="0 0 5 9"><path d="M0.700 0.700l3.600 3.800-3.600 3.800" fill="none" stroke="#222" stroke-width="1.200"/></svg>
<svg style="left:60px;top:841px" width="13" height="13" viewBox="0 0 13 13"><rect x="0.500" y="0.500" width="12" height="12" fill="none" stroke="#606163" stroke-width="1" stroke-dasharray="1.500 1.500"/><path d="M3 4h7v3.500l-3.500 2.500L3 7.500z" fill="#4a86c8"/></svg>
<div class="t" style="left:86.4px;top:842px;letter-spacing:-0.27px;">Selektionen</div>
<svg style="left:48px;top:875px" width="5" height="9" viewBox="0 0 5 9"><path d="M0.700 0.700l3.600 3.800-3.600 3.800" fill="none" stroke="#222" stroke-width="1.200"/></svg>
<svg style="left:60.5px;top:872px" width="13" height="14" viewBox="0 0 13 14"><rect x="0" y="0" width="12.600" height="14" rx="1.400" fill="#4a86c8"/><path d="M0 1.400A1.400 1.400 0 0 1 1.400 0H2.800V14H1.400A1.400 1.400 0 0 1 0 12.600z" fill="#5f6062"/><path d="M3.200 2.600h9.400" stroke="#c5d9f2" stroke-width="1"/></svg>
<div class="t" style="left:86.4px;top:873px;letter-spacing:-0.31px;">Stammdaten</div>
<svg style="left:48px;top:906px" width="5" height="9" viewBox="0 0 5 9"><path d="M0.700 0.700l3.600 3.800-3.600 3.800" fill="none" stroke="#222" stroke-width="1.200"/></svg>
<svg style="left:60px;top:903px" width="14" height="13" viewBox="0 0 14 13"><path d="M0 0h14v13H0z" fill="#f09a3c"/><path d="M1 1h12v5.200H1z" fill="#f4dcc0"/><path d="M2.200 1.800l3 3M5.600 1.800l-3.400 3.400M8.400 1.800l3.400 3.400M11.800 1.800l-3 3M4 3.800h6" stroke="#58595b" stroke-width="1.300"/></svg>
<div class="t" style="left:86.4px;top:904px;letter-spacing:-0.2px;">Werkzeuge</div>
<svg style="left:61px;top:935px" width="12" height="13" viewBox="0 0 12 13"><path d="M2 0v13M6 0v13M10 0v13" stroke="#606163" stroke-width="1"/><path d="M0.500 4h3M0.500 5.500h3M4.500 9h3M4.500 10.500h3M8.500 2.500h3M8.500 4h3" stroke="#4a86c8" stroke-width="1.100"/></svg>
<div class="t" style="left:86.4px;top:935px;letter-spacing:-0.26px;">Einstellungen</div>
<svg style="left:30px;top:972px" width="5" height="9" viewBox="0 0 5 9"><path d="M0.700 0.700l3.600 3.800-3.600 3.800" fill="none" stroke="#222" stroke-width="1.200"/></svg>
<svg style="left:44px;top:965px" width="18" height="22" viewBox="0 0 18 22"><rect x="0" y="0" width="18" height="15.500" fill="#4a86c8"/><rect x="1.400" y="3.200" width="15.200" height="12.300" fill="#a9c6ea"/><rect x="2.400" y="5.400" width="13.400" height="13.600" rx="1.600" fill="#6b6c6f"/><rect x="3.800" y="7" width="10.600" height="5" rx="0.600" fill="#dcdcdc"/><rect x="3.400" y="14.600" width="3" height="1.600" fill="#d8d8d8"/><rect x="11.800" y="14.600" width="3" height="1.600" fill="#d8d8d8"/><rect x="3.200" y="19" width="4" height="2.500" fill="#6b6c6f"/><rect x="11" y="19" width="4" height="2.500" fill="#6b6c6f"/></svg>
<div class="t" style="left:68px;top:970px;letter-spacing:-0.12px;">Lieferscheinerfassung</div>
<div class="a" style="left:24px;top:1000px;width:272px;height:12px;overflow:hidden"><svg style="left:21.500px;top:3px" width="16" height="14" viewBox="0 0 16 14"><path d="M1 9a7 7 0 0 1 14 0v1.500H1z" fill="#f09a3c"/><rect x="6" y="0.500" width="4" height="6" rx="1" fill="#f7c48e"/></svg><div class="t" style="left:44px;top:9px;letter-spacing:-0.300px">NU-Management</div></div>
<div class="a" style="left:313px;top:158px;width:1606px;height:23px;background:#dddddd;"></div>
<div class="a" style="left:314px;top:158px;width:173px;height:23px;background:#f0f0f0;"></div>
<div class="t" style="left:320px;top:163px;font-weight:bold;font-size:11.5px;color:#1e1e1e;letter-spacing:0.46px;">Sparten ([Standard])</div>
<svg style="left:452px;top:164px" width="9" height="9" viewBox="0 0 9 9"><path d="M0 4.500h3M3.500 1.500v6M3.500 2.500h4.500M3.500 6.500h4.500M8.500 1v7" fill="none" stroke="#444" stroke-width="1"/></svg>
<svg style="left:472px;top:165px" width="8" height="8" viewBox="0 0 8 8"><path d="M0 0l8 8M8 0l-8 8" stroke="#444" stroke-width="1"/></svg>
<svg style="left:1910px;top:168px" width="6" height="3" viewBox="0 0 6 3"><path d="M0 0h6L3 3z" fill="#444"/></svg>
<div class="a" style="left:314px;top:181px;width:1190px;height:833px;background:#f0f0f0;border:1px solid #b4b4b4;box-sizing:border-box;"></div>
<div class="a" style="left:313px;top:182px;width:1px;height:831px;background:#cfcfcf;"></div>
<div class="a" style="left:328px;top:194px;width:392px;height:20px;background:#fff;border:1px solid #a8a8a8;box-sizing:border-box;"></div>
<div class="t" style="left:331.7px;top:198px;color:#6e6e6e;letter-spacing:0.02px;">Bitte Suchtext hier eingeben...</div>
<div class="a" style="left:315px;top:226px;width:1188px;height:1px;background:#c6c6c6;"></div>
<div class="t" style="left:320px;top:238px;color:#6e6e6e;letter-spacing:-0.17px;">Ziehen Sie eine Spaltenüberschrift in diesen Bereich, um nach dieser zu gruppieren</div>
<div class="a" style="left:315px;top:259px;width:1188px;height:1px;background:#b0b0b0;"></div>
<div class="a" style="left:315px;top:282px;width:1188px;height:1px;background:#b0b0b0;"></div>
<div class="a" style="left:315px;top:283px;width:1188px;height:711px;background:#fff;"></div>
<div class="a" style="left:337px;top:260px;width:1px;height:22px;background:#b8b8b8;"></div>
<div class="a" style="left:472px;top:260px;width:1px;height:22px;background:#b8b8b8;"></div>
<div class="a" style="left:920px;top:260px;width:1px;height:22px;background:#b8b8b8;"></div>
<div class="a" style="left:1403px;top:260px;width:1px;height:22px;background:#b8b8b8;"></div>
<div class="t" style="left:438px;top:265px;font-weight:bold;font-size:11.5px;color:#6c6c6c;letter-spacing:-0.78px;">Nr</div>
<div class="t" style="left:450.5px;top:265px;font-size:7px;line-height:9px;height:9px;font-weight:bold;color:#3f76bf;">1</div>
<svg style="left:456px;top:268px" width="10" height="6" viewBox="0 0 10 6"><path d="M0 6L5 0L10 6z" fill="#6c6c6c"/></svg>
<div class="t" style="left:476.7px;top:265px;font-weight:bold;font-size:11.5px;color:#6c6c6c;letter-spacing:-0.06px;">Bezeichnung</div>
<div class="t" style="left:925px;top:265px;font-weight:bold;font-size:11.5px;color:#6c6c6c;letter-spacing:-0.01px;">Bezeichnung 2</div>
<svg style="left:321px;top:289px" width="10" height="9" viewBox="0 0 10 9"><path d="M0 0h10L6.100 4.300V9H3.900V4.300z" fill="#5c5c5c"/></svg>
<svg style="left:346px;top:291px" width="9" height="5" viewBox="0 0 9 5"><path d="M0 1h9M0 4h9" stroke="#606060" stroke-width="1"/></svg>
<svg style="left:477px;top:288px" width="16" height="11" viewBox="0 0 16 11"><rect x="0" y="0" width="7" height="11" rx="1" fill="#4a86c8"/><text x="3.500" y="8.300" font-family="Liberation Mono,monospace" font-weight="bold" font-size="7.500" text-anchor="middle" fill="#fff">A</text><text x="11.800" y="8.300" font-family="Liberation Mono,monospace" font-weight="bold" font-size="7" text-anchor="middle" fill="#555" letter-spacing="-0.300">BC</text></svg>
<svg style="left:925px;top:288px" width="16" height="11" viewBox="0 0 16 11"><rect x="0" y="0" width="7" height="11" rx="1" fill="#4a86c8"/><text x="3.500" y="8.300" font-family="Liberation Mono,monospace" font-weight="bold" font-size="7.500" text-anchor="middle" fill="#fff">A</text><text x="11.800" y="8.300" font-family="Liberation Mono,monospace" font-weight="bold" font-size="7" text-anchor="middle" fill="#555" letter-spacing="-0.300">BC</text></svg>
<div class="a" style="left:337px;top:325px;width:1067px;height:20px;background:#d1e8e2;"></div>
<div class="a" style="left:337px;top:303px;width:1067px;height:1px;background:#c6c6c6;"></div>
<div class="a" style="left:337px;top:324px;width:1067px;height:1px;background:#c6c6c6;"></div>
<div class="a" style="left:337px;top:345px;width:1067px;height:1px;background:#c6c6c6;"></div>
<div class="a" style="left:337px;top:366px;width:1067px;height:1px;background:#c6c6c6;"></div>
<div class="a" style="left:337px;top:387px;width:1067px;height:1px;background:#c6c6c6;"></div>
<div class="a" style="left:315px;top:303px;width:22px;height:1px;background:#c6c6c6;"></div>
<div class="a" style="left:337px;top:283px;width:1px;height:105px;background:#c6c6c6;"></div>
<div class="a" style="left:472px;top:283px;width:1px;height:105px;background:#c6c6c6;"></div>
<div class="a" style="left:920px;top:283px;width:1px;height:105px;background:#c6c6c6;"></div>
<div class="a" style="left:1403px;top:283px;width:1px;height:105px;background:#c6c6c6;"></div>
<div class="a" style="left:473px;top:325px;width:447px;height:20px;border:1px dotted #222;box-sizing:border-box;"></div>
<svg style="left:324px;top:331px" width="4" height="8" viewBox="0 0 4 8"><path d="M0 0L4 4L0 8z" fill="#5a5a5a"/></svg>
<div class="t" style="left:462.4px;top:308px;color:#111;">1</div>
<div class="t" style="left:476.3px;top:308px;color:#111;letter-spacing:-0.34px;">Hochbau</div>
<div class="t" style="left:462.4px;top:329px;color:#111;">2</div>
<div class="t" style="left:476.3px;top:329px;color:#111;letter-spacing:-0.05px;">Tiefbau</div>
<div class="t" style="left:457.5px;top:350px;color:#111;letter-spacing:-0.42px;">11</div>
<div class="t" style="left:476.3px;top:350px;color:#111;letter-spacing:-0.16px;">Straßenbau</div>
<div class="t" style="left:457.1px;top:371px;color:#111;letter-spacing:-0.85px;">12</div>
<div class="t" style="left:476.3px;top:371px;color:#111;letter-spacing:-0.32px;">Schienenbau</div>
<div class="a" style="left:315px;top:994px;width:1188px;height:1px;background:#b0b0b0;"></div>
<div class="a" style="left:315px;top:995px;width:136px;height:18px;background:#fff;"></div>
<div class="a" style="left:451px;top:995px;width:1px;height:18px;background:#b8b8b8;"></div>
<svg style="left:318px;top:1000px" width="9" height="7" viewBox="0 0 9 7"><path d="M0.500 0v7" stroke="#666" stroke-width="1"/><path d="M5 0v7L1.500 3.500z M9 0v7L5.500 3.500z" fill="#666"/></svg>
<svg style="left:334px;top:1000px" width="8" height="7" viewBox="0 0 8 7"><path d="M3.500 0v7L0 3.500z M7.500 0v7L4 3.500z" fill="#666"/></svg>
<svg style="left:350px;top:1000px" width="4" height="7" viewBox="0 0 4 7"><path d="M3.500 0v7L0 3.500z" fill="#666"/></svg>
<div class="t" style="left:365px;top:999px;color:#111;letter-spacing:-0.05px;">2 von 4</div>
<svg style="left:412px;top:1000px" width="4" height="7" viewBox="0 0 4 7"><path d="M0.500 0v7L4 3.500z" fill="#666"/></svg>
<svg style="left:426px;top:1000px" width="8" height="7" viewBox="0 0 8 7"><path d="M0.500 0v7L4 3.500z M4.500 0v7L8 3.500z" fill="#666"/></svg>
<svg style="left:440px;top:1000px" width="9" height="7" viewBox="0 0 9 7"><path d="M0 0v7L3.500 3.500z M4 0v7L7.500 3.500z" fill="#666"/><path d="M8.500 0v7" stroke="#666" stroke-width="1"/></svg>
<div class="t" style="left:1409.5px;top:998px;color:#111;letter-spacing:-0.11px;">1 Zeile(n) selektiert</div>
<div class="a" style="left:1504px;top:181px;width:415px;height:833px;background:#f0f0f0;"></div>
<div class="a" style="left:1504px;top:181px;width:1px;height:833px;background:#b4b4b4;"></div>
<div class="a" style="left:1505px;top:181px;width:414px;height:22px;background:#dddddd;"></div>
<div class="a" style="left:1504px;top:180px;width:415px;height:1px;background:#c9c9c9;"></div>
<div class="a" style="left:1505px;top:203px;width:414px;height:1px;background:#d2d2d2;"></div>
<div class="t" style="left:1510px;top:186px;font-weight:bold;font-size:11.5px;color:#1e1e1e;letter-spacing:0.18px;">Details</div>
<svg style="left:1904px;top:188px" width="7" height="10" viewBox="0 0 7 10"><path d="M1 0.500h5M1.500 0v5M5.500 0v5M0 5.500h7M3.500 6v4" fill="none" stroke="#4a4a4a" stroke-width="1"/></svg>
<div class="a" style="left:1602px;top:216px;width:306px;height:20px;background:#fff;border:1px solid #a8a8a8;box-sizing:border-box;"></div>
<div class="a" style="left:1602px;top:240px;width:306px;height:20px;background:#fff;border:1px solid #a8a8a8;box-sizing:border-box;"></div>
<div class="a" style="left:1602px;top:264px;width:306px;height:20px;background:#fff;border:1px solid #a8a8a8;box-sizing:border-box;"></div>
<div class="t" style="left:1516.4px;top:221px;letter-spacing:-0.34px;"><u>N</u>r:</div>
<div class="t" style="left:1516.4px;top:245px;letter-spacing:-0.29px;"><u>B</u>ezeichnung:</div>
<div class="t" style="left:1516.4px;top:269px;letter-spacing:-0.26px;"><u>B</u>ezeichnung 2:</div>
<div class="t" style="left:1897.5px;top:220px;color:#111;">2</div>
<div class="t" style="left:1605.8px;top:244px;color:#111;letter-spacing:-0.12px;">Tiefbau</div>
<div class="a" style="left:0px;top:1013px;width:1919px;height:26px;background:#dddddd;"></div>
<div class="t" style="left:5px;top:1021px;font-weight:bold;font-size:11.5px;color:#1e1e1e;letter-spacing:0.39px;">V2. 2023.12 (x64) vom 20.12.2023</div>
<div class="t" style="left:1457.8px;top:1021px;color:#1e1e1e;letter-spacing:-0.23px;">12: PD - Dokumentationen</div>
<div class="a" style="left:1589px;top:1015px;width:1px;height:22px;background:#c0c0c0;"></div>
<div class="a" style="left:1643px;top:1015px;width:1px;height:22px;background:#c0c0c0;"></div>
<div class="a" style="left:1802px;top:1015px;width:1px;height:22px;background:#c0c0c0;"></div>
<div class="a" style="left:1894px;top:1015px;width:1px;height:22px;background:#c0c0c0;"></div>
<svg style="left:1596px;top:1022px" width="16" height="11" viewBox="0 0 16 11"><rect width="16" height="3.700" fill="#222"/><rect y="3.700" width="16" height="3.700" fill="#dd2c2c"/><rect y="7.300" width="16" height="3.700" fill="#f5c218"/></svg>
<div class="t" style="left:1616.5px;top:1021px;color:#1e1e1e;letter-spacing:-0.85px;">DEU</div>
<svg style="left:1651px;top:1020px" width="14" height="14" viewBox="0 0 14 14"><circle cx="7" cy="7" r="7" fill="#2e9e57"/><path d="M3.500 7.200l2.500 2.600 4.700-5" fill="none" stroke="#fff" stroke-width="1.700"/></svg>
<div class="t" style="left:1670px;top:1021px;color:#1e1e1e;letter-spacing:-0.12px;">Mit Dokuarchiv verbunden</div>
<div class="t" style="left:1809.8px;top:1021px;color:#1e1e1e;letter-spacing:-0.03px;">163: Durt, Peter</div>
<div class="t" style="left:1900.5px;top:1021px;color:#1e1e1e;letter-spacing:-0.85px;">PD</div>
</body>
</html>
